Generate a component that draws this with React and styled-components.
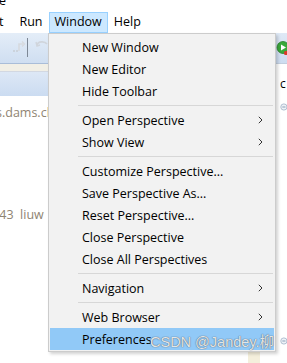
import styled, { createGlobalStyle } from 'styled-components'

const GlobalStyle = createGlobalStyle`
  html, body {
    margin: 0;
    padding: 0;
    background: #fff;
  }
  body {
    font-family: "Open Sans", "Noto Sans", sans-serif;
  }
`

const menuItems = [
  { label: 'New Window' },
  { label: 'New Editor' },
  { label: 'Hide Toolbar' },
  { sep: true },
  { label: 'Open Perspective', sub: true },
  { label: 'Show View', sub: true },
  { sep: true },
  { label: 'Customize Perspective...' },
  { label: 'Save Perspective As...' },
  { label: 'Reset Perspective...' },
  { label: 'Close Perspective' },
  { label: 'Close All Perspectives' },
  { sep: true },
  { label: 'Navigation', sub: true },
  { sep: true },
  { label: 'Web Browser', sub: true },
  { label: 'Preferences', active: true },
]

const Chevron = () => (
  <svg width="5" height="8" viewBox="0 0 5 8">
    <path d="M0.8 0.8 L4 4 L0.8 7.2" fill="none" stroke="#333" strokeWidth="1" />
  </svg>
)

const RedoIcon = () => (
  <svg width="14" height="14" viewBox="0 0 14 14">
    <path d="M1 12 L6 12" stroke="#c8cdd4" strokeWidth="1.5" strokeDasharray="2 1" />
    <path d="M7 12 V5 H11" fill="none" stroke="#d6dadf" strokeWidth="1.6" />
    <path d="M10 2.5 L12.5 5 L10 7.5" fill="none" stroke="#d6dadf" strokeWidth="1.4" />
  </svg>
)

const UndoIcon = () => (
  <svg width="14" height="14" viewBox="0 0 14 14">
    <path d="M2 6 C3 2 10 2 12 5" fill="none" stroke="#d0d5dc" strokeWidth="1.6" />
    <path d="M1 3 L2 7 L5 6" fill="none" stroke="#d0d5dc" strokeWidth="1.4" />
  </svg>
)

const RunIcon = () => (
  <svg width="14" height="15" viewBox="0 0 14 15">
    <circle cx="7" cy="6.5" r="6" fill="#3aa83a" stroke="#2a7d2a" strokeWidth="0.8" />
    <path d="M5 3.5 L10 6.5 L5 9.5 Z" fill="#fff" />
    <rect x="8" y="10" width="6" height="4" rx="1.5" fill="#d83a2a" />
  </svg>
)

const CollapseIcon = () => (
  <svg width="9" height="10" viewBox="0 0 9 10">
    <circle cx="5" cy="5" r="4" fill="#eef2f7" stroke="#9fb0c6" strokeWidth="1" />
    <path d="M3 5 H7" stroke="#7088a8" strokeWidth="1" />
  </svg>
)

const App = () => (
  <>
    <GlobalStyle />
    <Frame>
      <TitleStrip>e</TitleStrip>
      <MenuBar>
        <BarItem $cut>t</BarItem>
        <BarItem>Run</BarItem>
        <BarItem $open>Window</BarItem>
        <BarItem>Help</BarItem>
      </MenuBar>
      <Workbench>
        <LeftPane>
          <Toolbar>
            <ToolIcon><RedoIcon /></ToolIcon>
            <ToolSep />
            <ToolIcon><UndoIcon /></ToolIcon>
          </Toolbar>
          <CreamStrip />
          <TabBand />
          <Editor>
            <CodeLine $top={10}>s.dams.cl</CodeLine>
            <CodeLine $top={88}>:43&nbsp;&nbsp;liuw</CodeLine>
          </Editor>
          <BottomRow>
            <CreamBlock />
          </BottomRow>
        </LeftPane>
        <RightPane>
          <SideToolbar>
            <RunIcon />
          </SideToolbar>
          <SideBody>
            <SideText>c</SideText>
            <SideIcon $top={11}><CollapseIcon /></SideIcon>
            <SideFill />
            <SideIcon $top={0}><CollapseIcon /></SideIcon>
          </SideBody>
        </RightPane>
      </Workbench>

      <Dropdown>
        {menuItems.map((item, idx) =>
          item.sep ? (
            <Separator key={idx} />
          ) : (
            <Item key={idx} $active={item.active}>
              <span>{item.label}</span>
              {item.sub && <Chevron />}
            </Item>
          )
        )}
      </Dropdown>
      <Watermark>CSDN @Jandey.柳</Watermark>
    </Frame>
  </>
)

const Frame = styled.div`
  position: relative;
  width: 287px;
  height: 363px;
  overflow: hidden;
  background: #fff;
  display: flex;
  flex-direction: column;
  font-family: "Open Sans", "Noto Sans", sans-serif;
  font-size: 12.5px;
  color: #000;
`

const TitleStrip = styled.div`
  height: 12px;
  line-height: 2px;
  margin-left: -1px;
  overflow: hidden;
  font-size: 12.5px;
`

const MenuBar = styled.div`
  height: 21px;
  display: flex;
  align-items: stretch;
`

const BarItem = styled.div`
  display: flex;
  align-items: center;
  padding: 0 5px 1px;
  margin-left: ${p => (p.$cut ? '-7px' : '0')};
  margin-right: ${p => (p.$cut ? '4px' : '0')};
  border: 1px solid ${p => (p.$open ? '#99d1ff' : 'transparent')};
  background: ${p => (p.$open ? '#cce8ff' : 'transparent')};
  line-height: 1;
`

const Workbench = styled.div`
  flex: 1;
  display: flex;
  min-height: 0;
`

const LeftPane = styled.div`
  flex: 1;
  display: flex;
  flex-direction: column;
`

const Toolbar = styled.div`
  height: 31px;
  display: flex;
  align-items: flex-start;
  padding: 6px 0 0 12px;
  box-sizing: border-box;
  background: linear-gradient(#e4edf8, #cfdef1);
  border-bottom: 1px solid #a9bdd8;
`

const ToolIcon = styled.div`
  width: 14px;
  height: 14px;
  display: flex;
`

const ToolSep = styled.div`
  width: 1px;
  height: 19px;
  margin: -1px 7px 0 1px;
  background: #7d8896;
`

const CreamStrip = styled.div`
  height: 7px;
  background: #f1efe6;
  border-bottom: 1px solid #d2d8e2;
`

const TabBand = styled.div`
  height: 24px;
  background: linear-gradient(#dde8f6, #cbdcf1);
`

const Editor = styled.div`
  flex: 1;
  display: flex;
  flex-direction: column;
`

const CodeLine = styled.div`
  margin-top: ${p => p.$top}px;
  margin-left: -4px;
  color: #8f8472;
  font-size: 12.5px;
  line-height: 14px;
  white-space: pre;
`

const BottomRow = styled.div`
  height: 11px;
  display: flex;
  justify-content: flex-end;
  padding-right: 16px;
`

const CreamBlock = styled.div`
  width: 12px;
  height: 11px;
  background: #f4efdc;
`

const RightPane = styled.div`
  width: 11px;
  display: flex;
  flex-direction: column;
`

const SideToolbar = styled.div`
  height: 31px;
  padding: 8px 0 0 0;
  box-sizing: border-box;
  background: linear-gradient(#dfe9f6, #cddcf0);
  border-bottom: 1px solid #c3cfdf;
  overflow: hidden;
`

const SideBody = styled.div`
  flex: 1;
  display: flex;
  flex-direction: column;
  padding: 0 0 17px 4px;
`

const SideText = styled.div`
  margin-top: 13px;
  font-size: 12px;
  line-height: 14px;
`

const SideIcon = styled.div`
  margin-top: ${p => p.$top}px;
  display: flex;
`

const SideFill = styled.div`
  flex: 1;
`

const Dropdown = styled.div`
  position: absolute;
  left: 48px;
  top: 33px;
  width: 228px;
  box-sizing: border-box;
  padding: 2px 1px 1px;
  background: #f2f2f2;
  border: 1px solid #cccccc;
  box-shadow: 2px 2px 3px rgba(0, 0, 0, 0.18);
  display: flex;
  flex-direction: column;
`

const Item = styled.div`
  height: 22px;
  display: flex;
  align-items: center;
  justify-content: space-between;
  padding: 0 11px 0 32px;
  background: ${p => (p.$active ? '#91c9f7' : 'transparent')};
  white-space: nowrap;
`

const Separator = styled.div`
  height: 1px;
  margin: 3px 1px 3px 28px;
  background: #d7d7d7;
`

const Watermark = styled.div`
  position: absolute;
  left: 150px;
  top: 330px;
  font-family: "Liberation Sans", "Noto Sans CJK SC", sans-serif;
  font-size: 14.5px;
  color: rgba(255, 255, 255, 0.85);
  text-shadow: 0 0 1px rgba(60, 60, 60, 0.7), 0 0 1px rgba(60, 60, 60, 0.5);
  white-space: nowrap;
  pointer-events: none;
`

export default App
